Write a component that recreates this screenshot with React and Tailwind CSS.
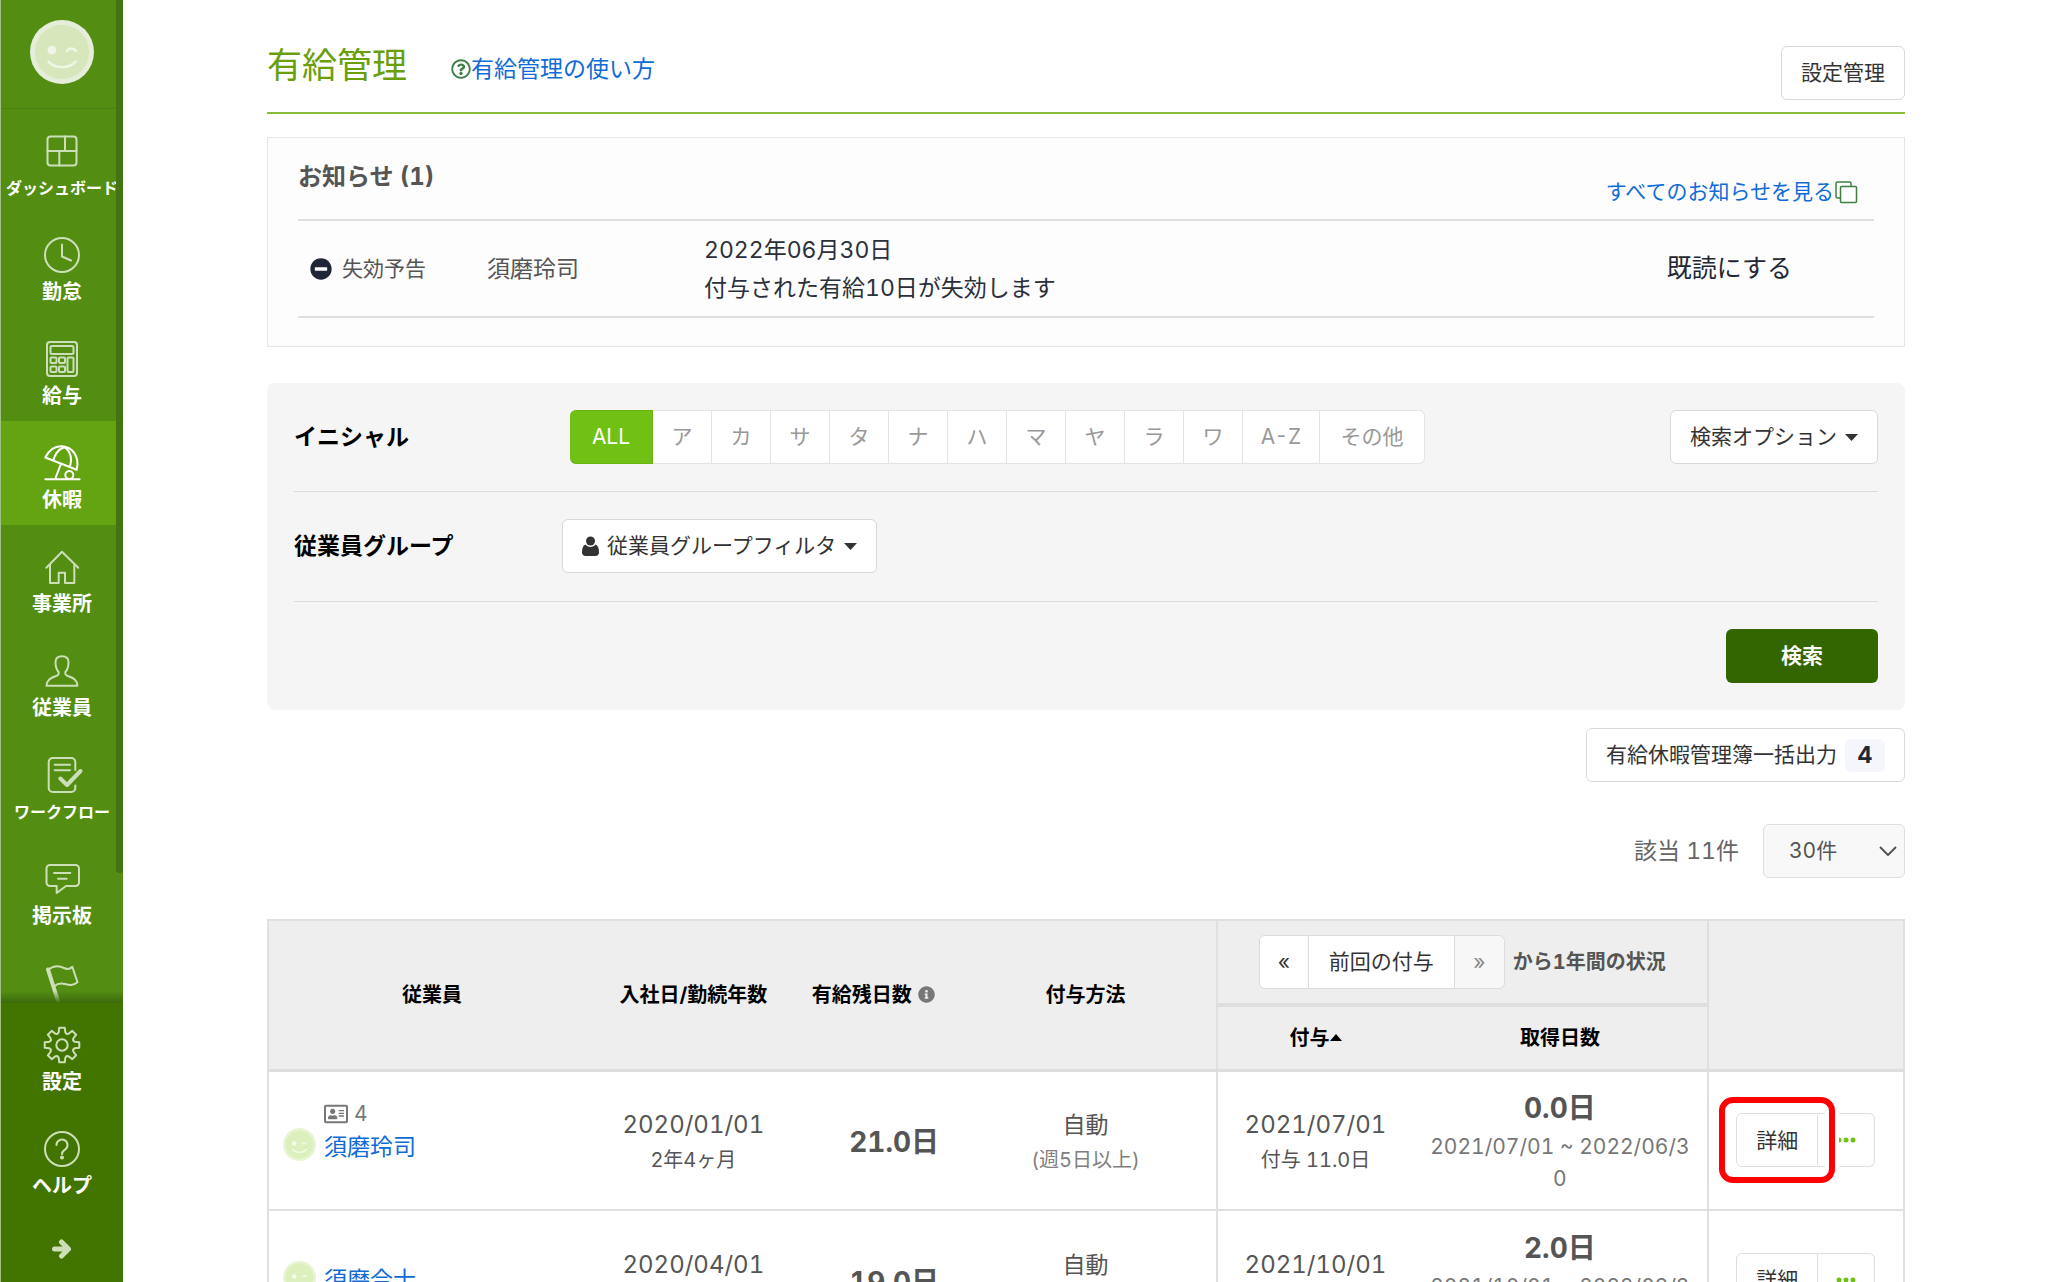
import { useState } from "react";
import { FaInfoCircle, FaMinusCircle, FaRegAddressCard, FaRegQuestionCircle } from "react-icons/fa";

const INITIALS = ["ア", "カ", "サ", "タ", "ナ", "ハ", "マ", "ヤ", "ラ", "ワ"];

const EMPLOYEES = [
  {
    name: "須磨玲司",
    code: "4",
    joined: "2020/01/01",
    years: "2年4ヶ月",
    remaining: "21.0日",
    method: "自動",
    condition: "(週5日以上)",
    granted: "2021/07/01",
    grantedDays: "付与 11.0日",
    taken: "0.0日",
    period: "2021/07/01 ~ 2022/06/30",
    highlighted: true,
  },
  {
    name: "須磨合士",
    joined: "2020/04/01",
    years: "2年1ヶ月",
    remaining: "19.0日",
    method: "自動",
    condition: "(週5日以上)",
    granted: "2021/10/01",
    grantedDays: "付与 11.0日",
    taken: "2.0日",
    period: "2021/10/01 ~ 2022/09/30",
  },
];

const GEAR_POINTS = Array.from({ length: 8 }, (_, i) => i * 45)
  .flatMap((deg) => [
    [deg - 15, 13],
    [deg - 9, 17.5],
    [deg + 9, 17.5],
    [deg + 15, 13],
    [deg + 22.5, 12],
  ])
  .map(([deg, r]) => {
    const a = ((deg - 90) * Math.PI) / 180;
    return `${(18 + r * Math.cos(a)).toFixed(2)},${(18 + r * Math.sin(a)).toFixed(2)}`;
  })
  .join(" ");

const ICONS = {
  dashboard: (
    <>
      <rect x="3.5" y="3.5" width="29" height="29" rx="3" />
      <path d="M3.5 18h29M21 3.5V18M15.3 18v14.5" />
    </>
  ),
  clock: (
    <>
      <circle cx="18" cy="18" r="17" />
      <path d="M18 7.5v12l9 4" />
    </>
  ),
  calculator: (
    <>
      <rect x="3" y="1" width="30" height="34" rx="3" />
      <rect x="6.5" y="5" width="23" height="8" rx="1.5" />
      <rect x="6.5" y="16.5" width="6" height="5.5" rx="1" />
      <rect x="15" y="16.5" width="6" height="5.5" rx="1" />
      <rect x="6.5" y="25.5" width="6" height="5.5" rx="1" />
      <rect x="15" y="25.5" width="6" height="5.5" rx="1" />
      <rect x="23.5" y="16.5" width="6" height="14.5" rx="1" />
    </>
  ),
  umbrella: (
    <path d="M1.3 12.5C5 5 11 1 18 1.3 28 2 36 11 32.7 24.7zM9.3 15.5C11 9 14.5 4.5 19.5 2.5c1 0 1.5 0 2.5.5 5.5 5 6 12 4 19M16.7 19.5 11 34.3M1.3 34.3h34.3M21.3 30a4 4 0 1 0 8 0 4 4 0 1 0-8 0" />
  ),
  home: <path d="M2.3 18.7 18 2.7l16.3 16M6 15.5V34h8.7V23.7H21V34h9.3V15.5" />,
  person: (
    <path d="M18 3.3c4 0 6.5 2 6.5 6s-.5 7-3 9.5c-.7 2 0 3.5 3 4.5 5 1.7 8.5 3.5 9 9.4h-31c.5-5.900 4-7.700 9-9.400 3-1 3.700-2.500 3-4.500-2.500-2.500-3-5.500-3-9.500s2.500-6 6.500-6z" />
  ),
  workflow: (
    <>
      <path d="M31.3 13V5a4 4 0 0 0-4-4H8.7a4 4 0 0 0-4 4v26a4 4 0 0 0 4 4h18.6a4 4 0 0 0 4-4v-2.5M10.7 7.7H26M10.7 13.3H26" />
      <path d="m16.3 21.5 6.7 6.5 13.5-14" strokeWidth="4" />
    </>
  ),
  board: (
    <path d="M6 4h25.500a3.500 3.500 0 0 1 3.500 3.500v14a3.500 3.500 0 0 1-3.500 3.500H22l-9.300 7V25H6a3.500 3.500 0 0 1-3.500-3.500v-14A3.500 3.500 0 0 1 6 4zM10 12h16.300M14 17.700h8.700" />
  ),
  flag: (
    <>
      <path d="M4 5C10 0 16 1 20 3s6 1 8.3-1.3l5.2 15.6C29 21 25 20 21 19s-7-1-10.5 2" />
      <path d="m4 4.5 10 31.5" strokeWidth="4" />
    </>
  ),
  gear: (
    <>
      <polygon points={GEAR_POINTS} />
      <circle cx="18" cy="18" r="5.7" />
    </>
  ),
  help: (
    <>
      <circle cx="18" cy="18" r="17" />
      <path d="M12.5 14a5.500 5.500 0 1 1 8.500 4.600c-2 1.300-3 2.200-3 4.400" />
      <circle cx="18" cy="26.5" r="1" fill="currentColor" />
    </>
  ),
};

const NAV = [
  { label: "ダッシュボード", icon: "dashboard", long: true },
  { label: "勤怠", icon: "clock" },
  { label: "給与", icon: "calculator" },
  { label: "休暇", icon: "umbrella", active: true },
  { label: "事業所", icon: "home" },
  { label: "従業員", icon: "person" },
  { label: "ワークフロー", icon: "workflow", long: true },
  { label: "掲示板", icon: "board" },
  { label: "", icon: "flag" },
];

function NavItem({ label, icon, active, long }) {
  return (
    <a
      href="#"
      aria-label={label || "フラグ"}
      className={`flex h-[104px] shrink-0 flex-col items-center pt-6 ${active ? "bg-[#64a413] text-white" : "text-[#cddfb8]"}`}
    >
      <svg viewBox="0 0 36 36" className="size-9 overflow-visible" fill="none" stroke="currentColor" strokeWidth="2" strokeLinejoin="round" strokeLinecap="round">
        {ICONS[icon]}
      </svg>
      <span className={`mt-[5px] whitespace-nowrap font-bold leading-7 text-white ${long ? "text-base" : "text-[20px]"}`}>{label}</span>
    </a>
  );
}

function Smiley({ className, bg, rim, face }) {
  return (
    <svg viewBox="0 0 66 66" className={className} fill="none" strokeLinecap="round">
      <circle cx="33" cy="33" r="33" fill={rim} />
      <circle cx="33" cy="33" r="28" fill={bg} />
      <circle cx="22.5" cy="31" r="4.5" fill={face} />
      <path d="M38 32c2.5-3.5 7-3.5 9.5 0M19 43c7 7.5 21 7.5 28 0" stroke={face} strokeWidth="2.5" />
    </svg>
  );
}

function Sidebar() {
  return (
    <aside className="flex w-[123px] shrink-0 flex-col border-l border-[#a3c084] bg-[#538e12]">
      <div className="relative flex min-h-0 flex-1 flex-col overflow-hidden">
        <div className="flex h-[109px] shrink-0 justify-center border-b border-[#4b8111] pt-5">
          <Smiley className="size-16" bg="#d7e7bb" rim="#e6eedb" face="#f0f5e8" />
        </div>
        <nav className="flex flex-col">
          {NAV.map((item) => (
            <NavItem key={item.icon} {...item} />
          ))}
        </nav>
        <div className="absolute right-0 top-0 h-[87%] w-[7px] rounded-b bg-[#427512]" />
        <div className="absolute inset-x-0 bottom-0 h-3 bg-linear-to-b from-transparent to-[#3b6a0c]" />
      </div>
      <div className="flex h-[279px] shrink-0 flex-col bg-[#427500]">
        <NavItem label="設定" icon="gear" />
        <NavItem label="ヘルプ" icon="help" />
        <button aria-label="メニューを開く" className="flex justify-center pt-7 text-[#cddfb8]">
          <svg viewBox="0 0 20 20" className="size-5" fill="none" stroke="currentColor" strokeWidth="5" strokeLinecap="round" strokeLinejoin="round">
            <path d="M2.5 10H16M9.5 3l7 7-7 7" />
          </svg>
        </button>
      </div>
    </aside>
  );
}

function Caret() {
  return (
    <svg viewBox="0 0 13 7" className="h-[7px] w-[13px]" fill="currentColor">
      <path d="M0 0h13L6.5 7z" />
    </svg>
  );
}

function Button({ className = "", children }) {
  return (
    <button className={`flex h-[54px] items-center gap-2 whitespace-nowrap rounded-md border border-[#d9d9d9] bg-white px-[19px] text-[21px] text-[#333] ${className}`}>
      {children}
    </button>
  );
}

function Header() {
  return (
    <header className="flex items-start justify-between border-b-2 border-[#8abb3a] pb-3 pt-[46px]">
      <div className="flex items-start gap-11">
        <h1 className="text-[35px] leading-[38px] text-[#6a9f0a]">有給管理</h1>
        <a href="#" className="mt-[7px] flex items-center text-[23px] leading-8 text-[#0f6bd7]">
          <FaRegQuestionCircle className="size-5 text-[#3f7f45]" />
          有給管理の使い方
        </a>
      </div>
      <Button>設定管理</Button>
    </header>
  );
}

function Notices() {
  return (
    <section className="mt-[23px] border border-[#e6e6e6] bg-[#fdfdfd] px-[30px] pb-7">
      <div className="flex items-start justify-between pb-[11px] pt-[23px]">
        <h2 className="text-2xl font-bold leading-8 text-[#555]">お知らせ (1)</h2>
        <a href="#" className="mr-4 mt-[15px] flex items-center text-[21px] leading-8 text-[#0f6bd7]">
          すべてのお知らせを見る
          <svg viewBox="0 0 24 24" className="size-6" fill="none" stroke="#3f7f45" strokeWidth="1.5">
            <path d="M6 18H3.5A1.5 1.5 0 0 1 2 16.5v-13A1.5 1.5 0 0 1 3.5 2h12A1.5 1.5 0 0 1 17 3.5V6" />
            <rect x="6.5" y="6.5" width="16" height="16" rx="1" />
          </svg>
        </a>
      </div>
      <ul>
        <li className="flex items-center border-y-2 border-[#dfdfdf] pb-[9px] pt-2.5">
          <span className="flex w-[189px] items-center gap-2.5 pl-3 text-[21px] text-[#555]">
            <FaMinusCircle className="size-[22px] text-[#1f2736]" />
            失効予告
          </span>
          <span className="w-[217px] text-[23px] text-[#555]">須磨玲司</span>
          <p className="flex-1 text-[23px] leading-[38px] text-[#2b2f3a]">
            2022年06月30日
            <br />
            付与された有給10日が失効します
          </p>
          <button className="mr-[82px] text-[25px] text-[#222833]">既読にする</button>
        </li>
      </ul>
    </section>
  );
}

function Filters() {
  const [initial, setInitial] = useState("ALL");
  const tab = (value, width) => (
    <button
      key={value}
      onClick={() => setInitial(value)}
      className={`h-[54px] border-y border-r text-center first:rounded-l-md last:rounded-r-md ${width} ${
        initial === value ? "border-[#6ab411] bg-[#70c114] text-white" : "border-[#e4e4e4] bg-white text-[#999]"
      }`}
    >
      {value}
    </button>
  );

  return (
    <section className="mt-9 rounded-lg bg-[#f5f5f5] p-[27px]">
      <div className="flex items-center border-b border-[#dcdcdc] pb-[27px]">
        <h3 className="w-[276px] text-[23px] font-bold text-black">イニシャル</h3>
        <div className="flex text-[21px]">
          {tab("ALL", "w-[83px]")}
          {INITIALS.map((kana) => tab(kana, "w-[59px]"))}
          {tab("A-Z", "w-[77px]")}
          {tab("その他", "w-[105px]")}
        </div>
        <Button className="ml-auto">
          検索オプション
          <Caret />
        </Button>
      </div>
      <div className="flex items-center border-b border-[#dcdcdc] pb-7 pt-[27px]">
        <h3 className="w-[268px] text-[23px] font-bold text-black">従業員グループ</h3>
        <Button>
          <svg viewBox="0 0 17 20" className="h-5 w-[17px]" fill="currentColor">
            <circle cx="8.5" cy="5" r="4.5" />
            <path d="M3.5 8.5C4.500 10 6.500 11 8.500 11s4-1 5-2.500C16 9.500 17 12 17 16.500c0 2-1.500 3.500-3.500 3.500h-10C1.500 20 0 18.500 0 16.500 0 12 1 9.500 3.500 8.500z" />
          </svg>
          <span>従業員グループフィルタ</span>
          <Caret />
        </Button>
      </div>
      <div className="flex justify-end pt-[27px]">
        <button className="h-[54px] w-[152px] rounded-md bg-[#336600] text-[21px] font-bold text-white">検索</button>
      </div>
    </section>
  );
}

function ListControls() {
  return (
    <div className="mt-[18px] flex flex-col items-end gap-[42px]">
      <Button>
        有給休暇管理簿一括出力
        <span className="flex h-[33px] w-10 items-center justify-center rounded-md bg-[#f5f6fb] text-[23px] font-bold text-[#222833]">4</span>
      </Button>
      <div className="flex items-center gap-6">
        <label htmlFor="per-page" className="text-[23px] text-[#666]">
          該当 11件
        </label>
        <div className="relative">
          <select
            id="per-page"
            className="h-[54px] w-[142px] appearance-none rounded-md border border-[#dedede] bg-[#f8f8f8] pl-[25px] text-[21px] text-[#555]"
          >
            <option>30件</option>
            <option>50件</option>
          </select>
          <svg viewBox="0 0 18 10" className="pointer-events-none absolute right-2 top-[22px] h-2.5 w-[18px]" fill="none" stroke="#555" strokeWidth="2">
            <path d="m1 1 8 8 8-8" />
          </svg>
        </div>
      </div>
    </div>
  );
}

function EmployeeRow({ employee: e }) {
  return (
    <tr className="h-[140px] border-b-2 border-[#e0e0e0] text-center text-[#555]">
      <td>
        <div className={`pl-[14px] text-left ${e.code ? "pb-[15px]" : ""}`}>
          {e.code && (
            <div className="flex h-7 items-center gap-1.5 pl-[41px] text-[21px] text-[#777]">
              <FaRegAddressCard className="size-6" />
              {e.code}
            </div>
          )}
          <div className="flex items-start gap-2">
            <Smiley className="size-[33px]" bg="#dcf0bd" rim="#e8f5d4" face="#f5fbec" />
            <a href="#" className="text-[23px] leading-[38px] text-[#0f6bd7]">
              {e.name}
            </a>
          </div>
        </div>
      </td>
      <td className="pt-1">
        <p className="text-2xl leading-9">{e.joined}</p>
        <p className="text-[20px] leading-[34px]">{e.years}</p>
      </td>
      <td className="pr-4 pt-1 text-right text-[28px] font-bold">{e.remaining}</td>
      <td className="border-r-2 border-[#e0e0e0] pt-1">
        <p className="text-[23px] leading-9">{e.method}</p>
        <p className="text-[20px] leading-[34px] text-[#808080]">{e.condition}</p>
      </td>
      <td className="pt-1">
        <p className="text-2xl leading-9">{e.granted}</p>
        <p className="text-[20px] leading-[34px]">{e.grantedDays}</p>
      </td>
      <td className="border-r-2 border-[#e0e0e0] px-4">
        <p className="text-[28px] font-bold leading-[46px]">{e.taken}</p>
        <p className="break-all text-[21px] leading-8 text-[#777]">{e.period}</p>
      </td>
      <td>
        <div className="relative mx-auto flex w-[139px]">
          <button className="h-[54px] w-[82px] rounded-l-md border border-[#dedede] bg-white text-[21px] text-[#333]">詳細</button>
          <button aria-label="その他の操作" className="flex h-[54px] flex-1 items-center justify-center rounded-r-md border border-l-0 border-[#dedede] bg-white">
            <svg viewBox="0 0 20 6" className="h-1.5 w-5" fill="#70c114">
              <circle cx="3" cy="3" r="2.5" />
              <circle cx="10" cy="3" r="2.5" />
              <circle cx="17" cy="3" r="2.5" />
            </svg>
          </button>
          {e.highlighted && (
            <span className="pointer-events-none absolute -left-[17px] -top-4 h-[86px] w-[116px] rounded-[14px] border-6 border-[#ff0000] shadow-[0_0_0_4px_#fff,inset_0_0_0_4px_#fff]" />
          )}
        </div>
      </td>
    </tr>
  );
}

function EmployeeTable() {
  return (
    <table className="mt-[41px] w-full table-fixed border-collapse border-2 border-[#e0e0e0]">
      <colgroup>
        <col className="w-[20%]" />
        <col className="w-[12%]" />
        <col className="w-[10%]" />
        <col className="w-[16%]" />
        <col className="w-[12%]" />
        <col className="w-[18%]" />
        <col className="w-[12%]" />
      </colgroup>
      <thead className="bg-[#eee] text-[20px] text-black">
        <tr className="h-[85px]">
          <th rowSpan={2}>従業員</th>
          <th rowSpan={2}>入社日/勤続年数</th>
          <th rowSpan={2}>
            <span className="flex items-center justify-center gap-1.5">
              有給残日数
              <FaInfoCircle className="size-[17px] text-[#777]" />
            </span>
          </th>
          <th rowSpan={2} className="border-r-2 border-[#e0e0e0]">
            付与方法
          </th>
          <th colSpan={2} className="border-b-4 border-r-2 border-[#dedede]">
            <div className="flex items-center justify-center gap-2 text-[#555]">
              <div className="flex text-[21px] font-normal text-[#333]">
                <button className="h-[54px] w-[50px] rounded-l-md border border-[#dcdcdc] bg-white">«</button>
                <button className="h-[54px] border-y border-[#dcdcdc] bg-white px-5">前回の付与</button>
                <button className="h-[54px] w-[51px] rounded-r-md border border-[#dcdcdc] bg-[#f7f7f7] text-[#888]">»</button>
              </div>
              から1年間の状況
            </div>
          </th>
          <th rowSpan={2} aria-label="操作" />
        </tr>
        <tr className="h-[65px] border-b-3 border-[#dedede]">
          <th>
            <span className="flex items-center justify-center">
              付与
              <svg viewBox="0 0 12 7" className="h-[7px] w-3" fill="currentColor">
                <path d="M0 7h12L6 0z" />
              </svg>
            </span>
          </th>
          <th className="border-r-2 border-[#e0e0e0]">取得日数</th>
        </tr>
      </thead>
      <tbody>
        {EMPLOYEES.map((employee) => (
          <EmployeeRow key={employee.name} employee={employee} />
        ))}
      </tbody>
    </table>
  );
}

export default function App() {
  return (
    <div className="flex h-screen bg-white font-['Inter','Noto_Sans_CJK_JP',sans-serif] tabular-nums">
      <Sidebar />
      <main className="min-w-0 flex-1 overflow-y-auto px-36 [scrollbar-width:none]">
        <Header />
        <Notices />
        <Filters />
        <ListControls />
        <EmployeeTable />
      </main>
    </div>
  );
}
